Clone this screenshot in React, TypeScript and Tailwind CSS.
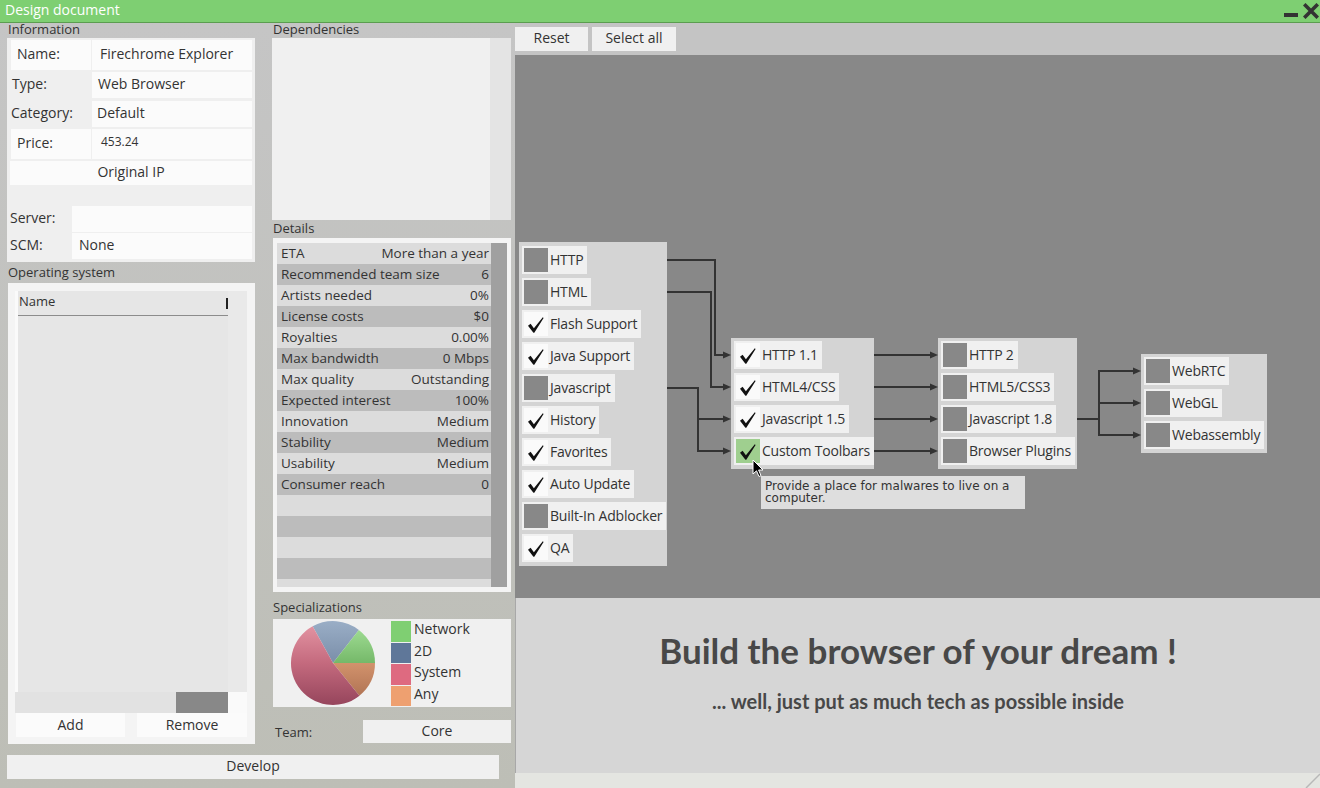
import React from "react";

type St = "off" | "on" | "hl";

function CheckMark() {
  return (
    <svg width="24" height="24" viewBox="0 0 24 24">
      <path d="M4 13.8 L6.6 11.8 L9.9 16.2 L18.8 5.2 L19.6 5.9 L10.3 20.8 L9.4 20.8 Z" fill="#111" />
    </svg>
  );
}

function Item({ label, st }: { label: string; st: St }) {
  const box =
    st === "off" ? "bg-[#888888]" : st === "hl" ? "bg-[#9fcf8f]" : "bg-[#fafafa]";
  return (
    <div className="flex items-center h-[28px] bg-[#f0f0f0] pl-[2px] pr-[4px] whitespace-nowrap shrink-0">
      <div className={`w-[24px] h-[24px] shrink-0 ${box} flex items-center justify-center`}>
        {st !== "off" && <CheckMark />}
      </div>
      <span className="ml-[2px] text-[14px] leading-none text-[#333] tracking-[-0.2px]">{label}</span>
    </div>
  );
}

function Group({
  items,
  cls,
}: {
  items: [string, St][];
  cls: string;
}) {
  return (
    <div className={`absolute bg-[#d4d4d4] pl-[3px] flex flex-col gap-[4px] items-start ${cls}`}>
      {items.map(([l, s]) => (
        <Item key={l} label={l} st={s} />
      ))}
    </div>
  );
}

function Arrow({ x, y }: { x: number; y: number }) {
  return <polygon points={`${x - 8},${y - 3.5} ${x},${y} ${x - 8},${y + 3.5}`} fill="#333" />;
}

const details: [string, string][] = [
  ["ETA", "More than a year"],
  ["Recommended team size", "6"],
  ["Artists needed", "0%"],
  ["License costs", "$0"],
  ["Royalties", "0.00%"],
  ["Max bandwidth", "0 Mbps"],
  ["Max quality", "Outstanding"],
  ["Expected interest", "100%"],
  ["Innovation", "Medium"],
  ["Stability", "Medium"],
  ["Usability", "Medium"],
  ["Consumer reach", "0"],
  ["", ""],
  ["", ""],
  ["", ""],
  ["", ""],
  ["", ""],
];

export default function App() {
  return (
    <div className="w-[1320px] h-[788px] overflow-hidden relative bg-[#c4c4c2] font-['Open_Sans',sans-serif] text-[#333]">
      {/* Title bar */}
      <div className="h-[23px] bg-[#7ecf72] border-b border-[#5b9d50] flex items-center relative">
        <span className="ml-[5px] text-[14px] leading-none text-white -mt-[2px]">Design document</span>
        <div className="absolute left-[1284px] top-[13px] w-[14px] h-[4px] bg-[#333]" />
        <svg className="absolute left-[1303px] top-[3px]" width="16" height="16" viewBox="0 0 16 16">
          <path d="M2.5 2.5 L13.5 13.5 M13.5 2.5 L2.5 13.5" stroke="#333" strokeWidth="3.6" strokeLinecap="square" />
        </svg>
      </div>

      <div className="flex h-[765px]">
        {/* Left part */}
        <div className="w-[515px] flex flex-col bg-gradient-to-b from-[#c5c5c5] to-[#bdbeb6]">
          <div className="flex h-[721px]">
            {/* Column A */}
            <div className="w-[248px] ml-[7px] flex flex-col">
              <div className="h-[15px] text-[13px] leading-[13px] pl-[1px]">Information</div>
              <div className="h-[224px] bg-[#efefef] px-[3px] flex flex-col text-[14px] leading-none">
                <div className="mt-[2px] h-[30px] flex">
                  <div className="ml-[1px] w-[80px] bg-[#fbfbfb] flex items-center pl-[6px] pb-[2px]">Name:</div>
                  <div className="ml-[1px] flex-1 bg-[#fbfbfb] flex items-center pl-[8px] pb-[3px]">Firechrome Explorer</div>
                </div>
                <div className="mt-[2px] h-[26px] flex">
                  <div className="w-[81px] flex items-center pl-[2px] pb-[2px]">Type:</div>
                  <div className="ml-[1px] flex-1 bg-[#fbfbfb] flex items-center pl-[6px] pb-[2px]">Web Browser</div>
                </div>
                <div className="mt-[3px] h-[26px] flex">
                  <div className="w-[81px] flex items-center pl-[1px] pb-[2px]">Category:</div>
                  <div className="ml-[1px] flex-1 bg-[#fbfbfb] flex items-center pl-[5px] pb-[2px]">Default</div>
                </div>
                <div className="mt-[2px] h-[30px] flex">
                  <div className="ml-[1px] w-[80px] bg-[#fbfbfb] flex items-center pl-[6px] pb-[2px]">Price:</div>
                  <div className="ml-[1px] flex-1 bg-[#fbfbfb] flex items-center pl-[9px] text-[12px] pb-[4px]">453.24</div>
                </div>
                <div className="mt-[2px] h-[24px] bg-[#fbfbfb] flex items-center justify-center pb-[2px]">Original IP</div>
                <div className="mt-[21px] h-[26px] flex">
                  <div className="w-[62px] flex items-center pb-[2px]">Server:</div>
                  <div className="flex-1 bg-[#fbfbfb]" />
                </div>
                <div className="mt-[1px] h-[26px] flex">
                  <div className="w-[62px] flex items-center pb-[2px]">SCM:</div>
                  <div className="flex-1 bg-[#fbfbfb] flex items-center pl-[7px] pb-[2px]">None</div>
                </div>
              </div>
              <div className="h-[21px] text-[13px] leading-[15px] pt-[3px] pl-[1px]">Operating system</div>
              <div className="ml-[1px] w-[247px] h-[461px] bg-[#f4f4f4] flex flex-col">
                <div className="mt-[8px] ml-[7px] w-[232px] h-[401px] flex">
                  <div className="w-[3px] bg-[#fafafa]" />
                  <div className="w-[210px] bg-[#e6e6e6] flex flex-col">
                    <div className="h-[25px] border-b border-[#8c8c8c] flex items-center relative text-[13px] pl-[1px] pb-[3px]">
                      Name
                      <div className="absolute left-[208px] top-[7px] w-[2px] h-[11px] bg-[#222]" />
                    </div>
                  </div>
                  <div className="w-[19px] bg-[#e9e9e9]" />
                </div>
                <div className="ml-[7px] w-[232px] h-[21px] flex">
                  <div className="w-[161px] bg-[#e2e2e2]" />
                  <div className="w-[52px] bg-[#888888]" />
                  <div className="w-[19px] bg-[#fafafa]" />
                </div>
                <div className="ml-[8px] h-[24px] flex text-[14px]">
                  <div className="w-[109px] bg-[#fbfbfb] flex items-center justify-center pb-[2px]">Add</div>
                  <div className="ml-[12px] w-[110px] bg-[#fbfbfb] flex items-center justify-center pb-[2px]">Remove</div>
                </div>
              </div>
            </div>

            {/* Column B */}
            <div className="w-[239px] ml-[17px] flex flex-col">
              <div className="h-[15px] text-[13px] leading-[13px] pl-[1px]">Dependencies</div>
              <div className="h-[182px] bg-[#f0f0f0] flex justify-end">
                <div className="w-[21px] bg-[#e4e4e4]" />
              </div>
              <div className="h-[18px] text-[13px] leading-[16px] pl-[1px]">Details</div>
              <div className="ml-[1px] h-[354px] bg-[#f4f4f4] pt-[5px] pl-[4px] pr-[4px] flex">
                <div className="w-[214px] h-[344px] overflow-hidden flex flex-col">
                  {details.map(([k, v], i) => (
                    <div
                      key={i}
                      className={`h-[21px] shrink-0 flex items-center justify-between pl-[4px] pr-[2px] text-[13.5px] leading-none ${
                        i % 2 === 0 ? "bg-[#dcdcdc]" : "bg-[#bcbcbc]"
                      }`}
                    >
                      <span>{k}</span>
                      <span>{v}</span>
                    </div>
                  ))}
                </div>
                <div className="w-[16px] h-[344px] bg-[#a0a0a0]" />
              </div>
              <div className="h-[27px] text-[13px] leading-[15px] pt-[8px] pl-[1px]">Specializations</div>
              <div className="ml-[1px] h-[88px] bg-[#f0f0f0] flex relative">
                <svg width="118" height="88" viewBox="0 0 118 88">
                  <defs>
                    <linearGradient id="gb" x1="0" y1="2" x2="0" y2="86" gradientUnits="userSpaceOnUse">
                      <stop offset="0" stopColor="#9aaec6" />
                      <stop offset="0.5" stopColor="#7a8ea9" />
                    </linearGradient>
                    <linearGradient id="gg" x1="0" y1="2" x2="0" y2="86" gradientUnits="userSpaceOnUse">
                      <stop offset="0.1" stopColor="#9edb92" />
                      <stop offset="0.55" stopColor="#70b464" />
                    </linearGradient>
                    <linearGradient id="go" x1="0" y1="40" x2="0" y2="86" gradientUnits="userSpaceOnUse">
                      <stop offset="0" stopColor="#d6966f" />
                      <stop offset="1" stopColor="#a86c4e" />
                    </linearGradient>
                    <linearGradient id="gr" x1="0" y1="2" x2="0" y2="86" gradientUnits="userSpaceOnUse">
                      <stop offset="0" stopColor="#e698a6" />
                      <stop offset="0.5" stopColor="#c46a7e" />
                      <stop offset="1" stopColor="#96455c" />
                    </linearGradient>
                  </defs>
                  <path d="M60 44 L39.64 7.27 A42 42 0 0 1 85.86 10.9 Z" fill="url(#gb)" />
                  <path d="M60 44 L85.86 10.9 A42 42 0 0 1 102 44 Z" fill="url(#gg)" />
                  <path d="M60 44 L102 44 A42 42 0 0 1 86.43 76.64 Z" fill="url(#go)" />
                  <path d="M60 44 L86.43 76.64 A42 42 0 1 1 39.64 7.27 Z" fill="url(#gr)" />
                </svg>
                <div className="mt-[2px] flex flex-col gap-[1px] text-[14px] leading-none">
                  {[
                    ["Network", "bg-[#7fcf72]"],
                    ["2D", "bg-[#5f7799]"],
                    ["System", "bg-[#de6a80]"],
                    ["Any", "bg-[#eea070]"],
                  ].map(([l, c]) => (
                    <div key={l} className="flex items-center h-[20.5px]">
                      <div className={`w-[20px] h-[20.5px] ${c}`} />
                      <span className="ml-[3px] -mt-[4px]">{l}</span>
                    </div>
                  ))}
                </div>
              </div>
              <div className="mt-[13px] h-[23px] flex items-center">
                <span className="ml-[3px] w-[88px] text-[13px] pt-[3px]">Team:</span>
                <div className="w-[148px] h-[23px] bg-[#f0f0f0] flex items-center justify-center text-[14px] pb-[2px]">Core</div>
              </div>
            </div>
          </div>
          <div className="ml-[7px] mt-[11px] w-[492px] h-[24px] bg-[#f0f0f0] flex items-center justify-center text-[14px] pb-[3px]">
            Develop
          </div>
        </div>

        {/* Right part */}
        <div className="flex-1 flex flex-col">
          <div className="h-[32px] bg-[#c4c4c4] flex items-start pt-[4px] text-[14px]">
            <div className="w-[73px] h-[24px] bg-[#f0f0f0] flex items-center justify-center pb-[3px]">Reset</div>
            <div className="ml-[4px] w-[84px] h-[24px] bg-[#f0f0f0] flex items-center justify-center pb-[3px]">Select all</div>
          </div>
          <div className="h-[543px] bg-[#888888] relative">
            <svg className="absolute left-0 top-0" width="805" height="543">
              <g stroke="#333" strokeWidth="2" fill="none">
                <path d="M152 205 H200 V300 H210" />
                <path d="M152 237 H196 V332 H210" />
                <path d="M152 333 H183 V396 H210 M183 364 H210" />
                <path d="M359 300 H417 M359 332 H417 M359 364 H417 M359 396 H417" />
                <path d="M562 364 H584 M584 315 V381 M584 316 H620 M584 348 H620 M584 380 H620" />
              </g>
              <Arrow x={216} y={300} />
              <Arrow x={216} y={332} />
              <Arrow x={216} y={364} />
              <Arrow x={216} y={396} />
              <Arrow x={423} y={300} />
              <Arrow x={423} y={332} />
              <Arrow x={423} y={364} />
              <Arrow x={423} y={396} />
              <Arrow x={626} y={316} />
              <Arrow x={626} y={348} />
              <Arrow x={626} y={380} />
            </svg>
            <Group
              cls="left-[4px] top-[187px] w-[148px] h-[324px] pt-[4px]"
              items={[
                ["HTTP", "off"],
                ["HTML", "off"],
                ["Flash Support", "on"],
                ["Java Support", "on"],
                ["Javascript", "off"],
                ["History", "on"],
                ["Favorites", "on"],
                ["Auto Update", "on"],
                ["Built-In Adblocker", "off"],
                ["QA", "on"],
              ]}
            />
            <Group
              cls="left-[216px] top-[283px] w-[143px] h-[131px] pt-[3px]"
              items={[
                ["HTTP 1.1", "on"],
                ["HTML4/CSS", "on"],
                ["Javascript 1.5", "on"],
                ["Custom Toolbars", "hl"],
              ]}
            />
            <Group
              cls="left-[423px] top-[283px] w-[139px] h-[131px] pt-[3px]"
              items={[
                ["HTTP 2", "off"],
                ["HTML5/CSS3", "off"],
                ["Javascript 1.8", "off"],
                ["Browser Plugins", "off"],
              ]}
            />
            <Group
              cls="left-[626px] top-[299px] w-[126px] h-[99px] pt-[3px]"
              items={[
                ["WebRTC", "off"],
                ["WebGL", "off"],
                ["Webassembly", "off"],
              ]}
            />
            <div className="absolute left-[246px] top-[421px] w-[264px] h-[33px] bg-[#dedede] px-[4px] pt-[4px] font-['DejaVu_Sans',sans-serif] text-[12px] leading-[12px] text-[#333] whitespace-nowrap">
              Provide a place for malwares to live on a<br />computer.
            </div>
            <svg className="absolute left-[237px] top-[404px]" width="13" height="19" viewBox="0 0 13 19">
              <path d="M1 1 L1 15 L4.5 11.8 L7 17.5 L9 16.6 L6.6 11 L11 11 Z" fill="#000" stroke="#fff" strokeWidth="1" />
            </svg>
          </div>
          <div className="h-[175px] bg-[#d6d6d6] border-l border-[#a8a8a8] flex flex-col items-center font-['Lato',sans-serif] font-bold text-[#484848]">
            <div className="mt-[31px] text-[35px] leading-[42px]">Build the browser of your dream !</div>
            <div className="mt-[17px] text-[20px] leading-[26px]">... well, just put as much tech as possible inside</div>
          </div>
          <div className="h-[15px] bg-[#e4e5e1] relative">
            <svg className="absolute right-0 bottom-0" width="15" height="15" viewBox="0 0 15 15">
              <path d="M15 1 L1 15" stroke="#b8b8b8" strokeWidth="1.5" />
            </svg>
          </div>
        </div>
      </div>
    </div>
  );
}
